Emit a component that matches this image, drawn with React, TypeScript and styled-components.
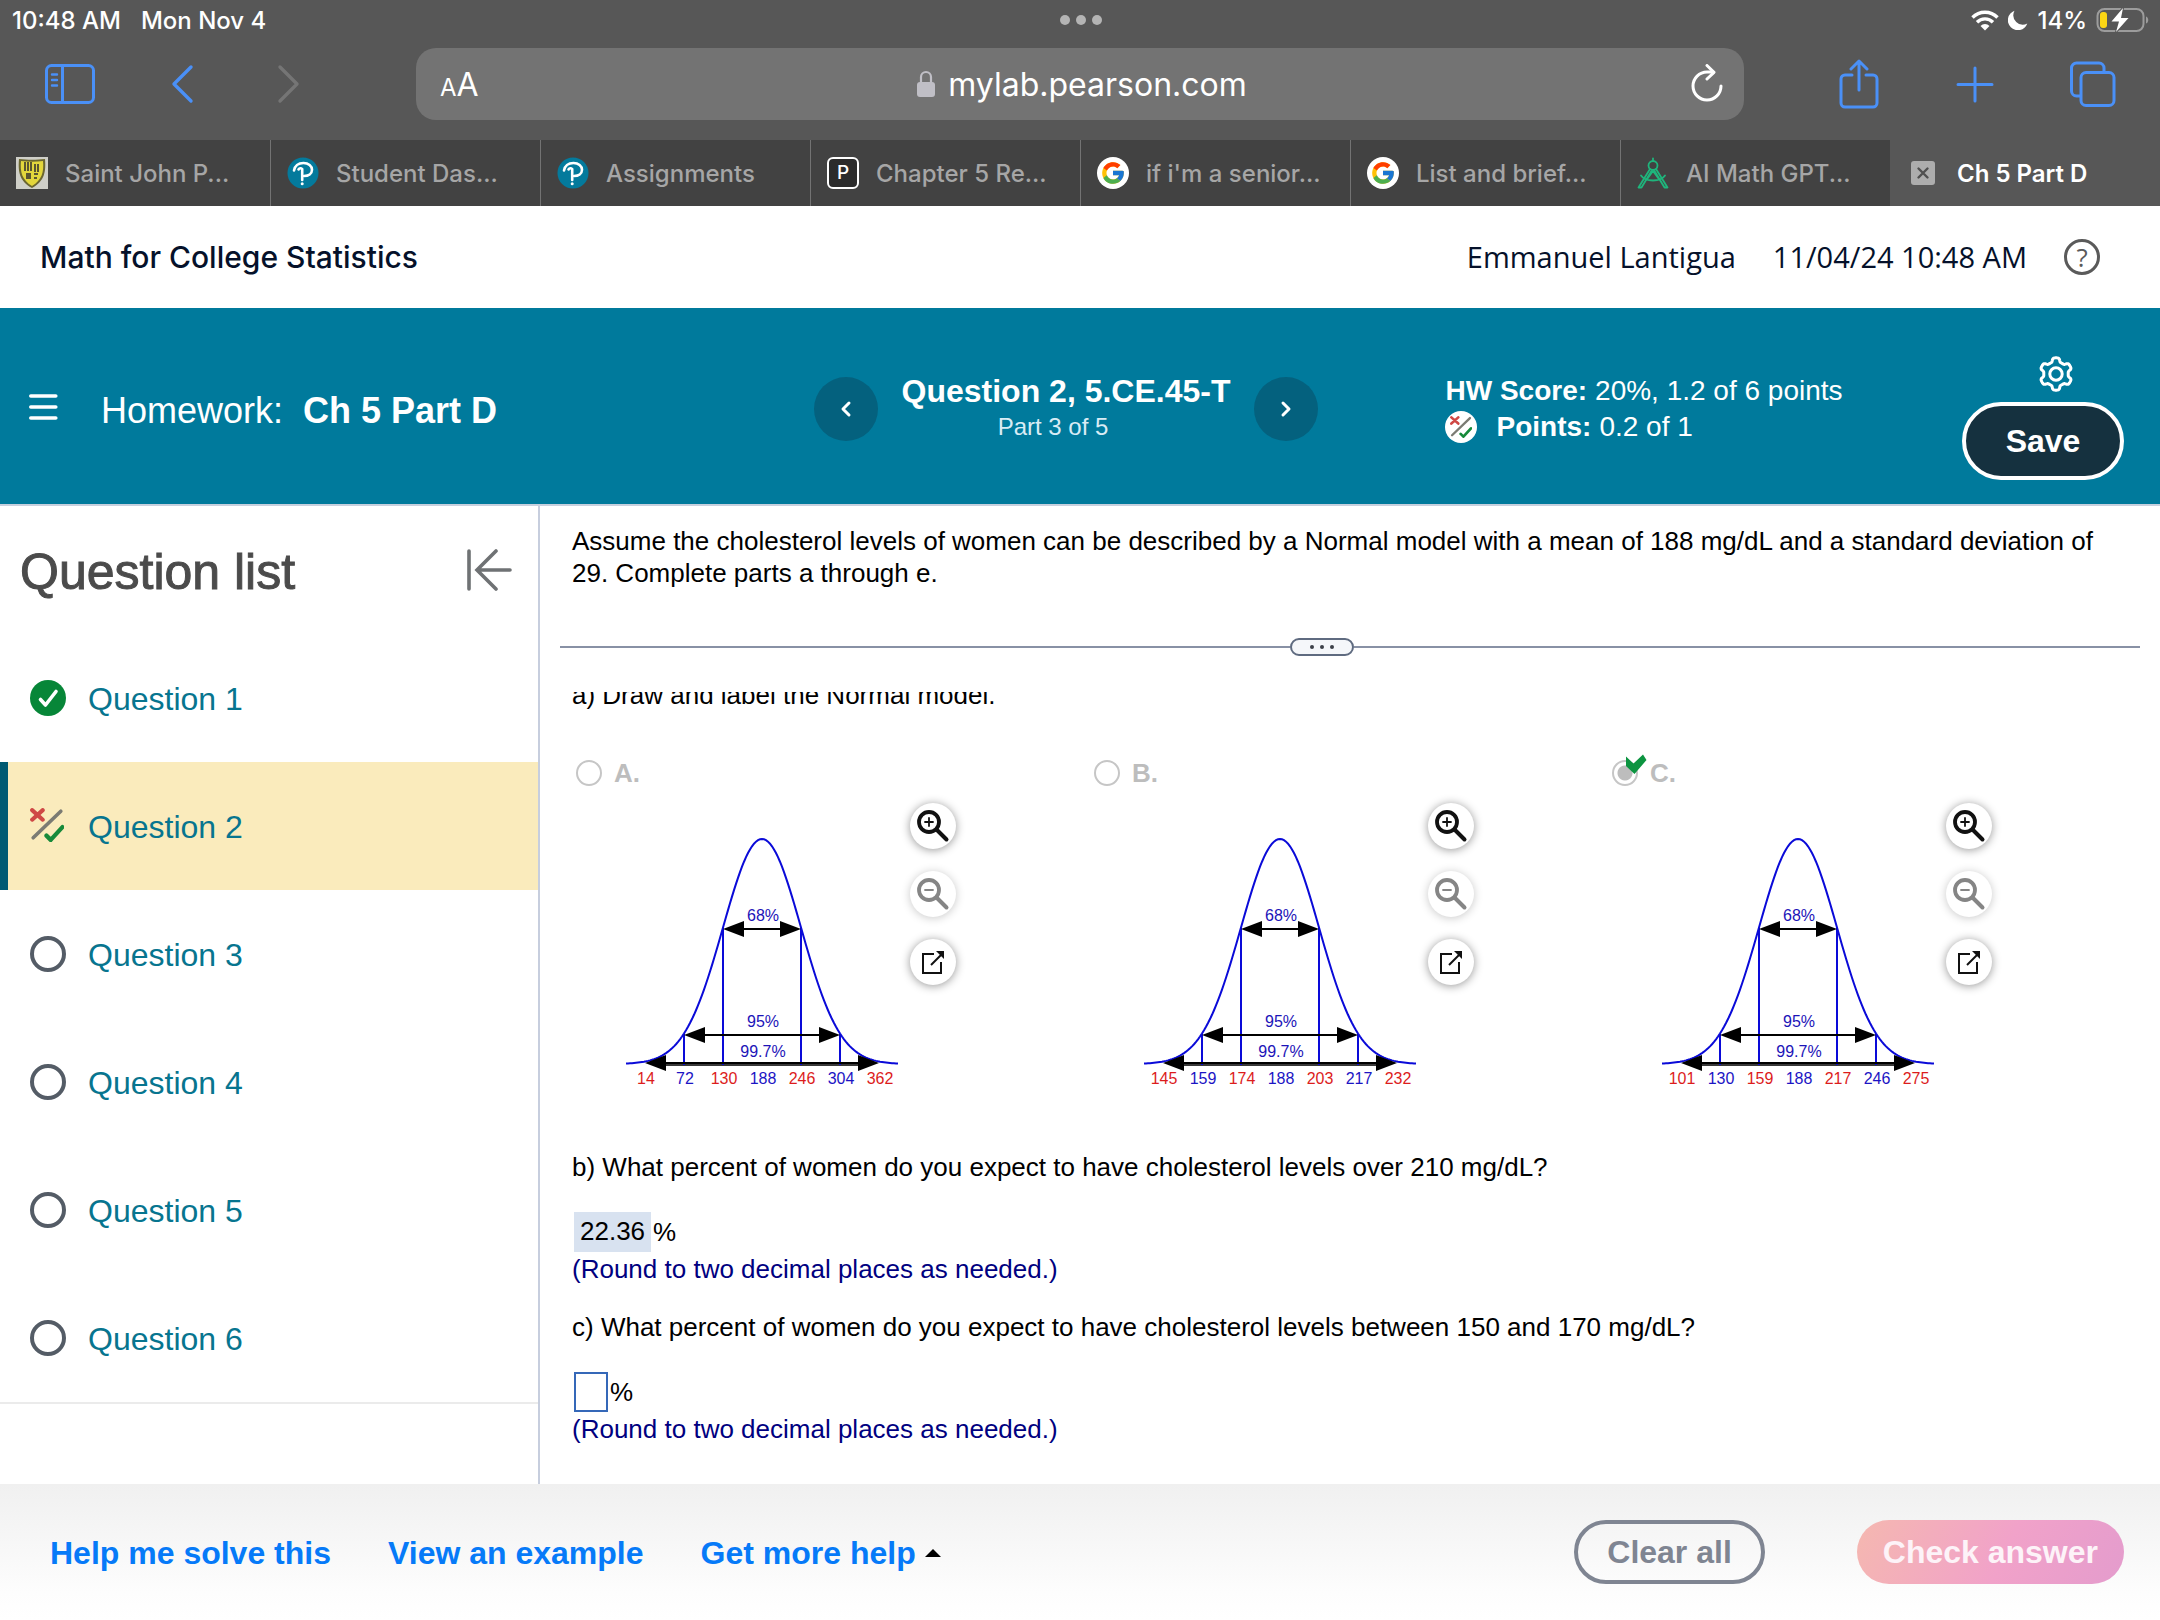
import React from "react";
import styled, { createGlobalStyle } from "styled-components";
import { FcGoogle } from "react-icons/fc";

const ui = `Inter, "Liberation Sans", sans-serif`;
const body = `"Liberation Sans", Arial, sans-serif`;

const GlobalStyle = createGlobalStyle`
  *, *::before, *::after { box-sizing: border-box; }
  body { margin: 0; background: #fff; color: #000; font-family: ${body}; }
  button { font: inherit; color: inherit; background: none; border: 0; padding: 0; margin: 0; cursor: pointer; }
  a { text-decoration: none; color: inherit; }
  h1, h2, p, ul { margin: 0; padding: 0; font-weight: inherit; }
  svg { display: block; flex: none; }
`;

const Page = styled.div`
  min-height: 100vh;
  display: flex;
  flex-direction: column;
`;

/* ---------- browser chrome ---------- */

const Chrome = styled.div`
  background: #575757;
  font-family: ${ui};
`;

const StatusBar = styled.div`
  height: 40px;
  padding: 0 10px 0 12px;
  display: grid;
  grid-template-columns: 1fr auto 1fr;
  align-items: center;
  color: #fff;
  font-size: 24px;
  font-weight: 500;
`;

const StatusGroup = styled.div<{ $end?: boolean }>`
  display: flex;
  align-items: center;
  justify-content: ${(p) => (p.$end ? "flex-end" : "flex-start")};
  gap: ${(p) => (p.$end ? 9 : 20)}px;
`;

const Toolbar = styled.div`
  padding: 8px 42px 20px 45px;
  display: flex;
  align-items: center;
`;

const ToolGroup = styled.div<{ $gap: number }>`
  display: flex;
  align-items: center;
  gap: ${(p) => p.$gap}px;
`;

const ToolButton = styled.button<{ $dim?: boolean }>`
  color: ${(p) => (p.$dim ? "#757575" : "#4a90f7")};
`;

const AddressBar = styled.div`
  flex: 1;
  height: 72px;
  margin: 0 90px 0 111px;
  padding: 0 20px 0 24px;
  border-radius: 20px;
  background: #737373;
  color: #fff;
  display: grid;
  grid-template-columns: 1fr auto 1fr;
  align-items: center;
`;

const TextSize = styled.button`
  justify-self: start;
  display: flex;
  align-items: baseline;
  font-size: 32px;
`;

const SmallA = styled.span`
  font-size: 24px;
`;

const Host = styled.div`
  display: flex;
  align-items: center;
  gap: 13px;
  font-size: 32px;
`;

const Reload = styled.button`
  justify-self: end;
`;

const Tabs = styled.nav`
  display: grid;
  grid-template-columns: repeat(8, minmax(0, 1fr));
  height: 66px;
`;

const Tab = styled.a<{ $active?: boolean; $edge?: boolean }>`
  display: flex;
  align-items: center;
  gap: ${(p) => (p.$active ? 22 : 17)}px;
  padding: 0 8px 0 ${(p) => (p.$active ? 21 : 16)}px;
  background: ${(p) => (p.$active ? "#575757" : "#424242")};
  color: ${(p) => (p.$active ? "#fff" : "#a6a6a6")};
  border-left: ${(p) => (p.$edge ? "1px solid #737373" : "0")};
  font-size: 24px;
  font-weight: ${(p) => (p.$active ? 600 : 500)};
  white-space: nowrap;
`;

const LetterIcon = styled.span`
  width: 32px;
  height: 32px;
  border: 2px solid #fff;
  border-radius: 6px;
  background: #2b2b2b;
  color: #fff;
  font-size: 19px;
  line-height: 28px;
  text-align: center;
`;

const RoundIcon = styled.span`
  width: 32px;
  height: 32px;
  border-radius: 50%;
  background: #fff;
  display: grid;
  place-items: center;
`;

/* ---------- course header ---------- */

const CourseBar = styled.header`
  height: 102px;
  padding: 0 60px 0 40px;
  display: flex;
  align-items: center;
  color: #05112a;
`;

const CourseTitle = styled.h1`
  flex: 1;
  font: 500 30px/40px ${ui};
`;

const UserInfo = styled.div`
  display: flex;
  align-items: center;
  gap: 37px;
  font: 400 29px/40px "Open Sans", "Noto Sans", sans-serif;
`;

const HelpButton = styled.button`
  width: 36px;
  height: 36px;
  border: 3px solid #5a5a5a;
  border-radius: 50%;
  color: #5a5a5a;
  font-size: 26px;
  line-height: 30px;
`;

const AssignmentBar = styled.section`
  min-height: 198px;
  padding: 6px 36px 0 8px;
  border-bottom: 2px solid #c7d0de;
  background: #007a9c;
  color: #fff;
  display: grid;
  grid-template-columns: minmax(0, 1fr) auto minmax(0, 1fr);
  align-items: center;
`;

const HomeworkTitle = styled.div`
  display: flex;
  align-items: center;
  padding: 4px 0 0 21px;
  font-size: 36px;
  line-height: 44px;
`;

const MenuButton = styled.button`
  margin: 0 42px 8px 0;
`;

const HomeworkName = styled.strong`
  margin-left: 20px;
`;

const QuestionNav = styled.div`
  display: flex;
  align-items: center;
  gap: 24px;
`;

const NavButton = styled.button`
  width: 64px;
  height: 64px;
  border-radius: 50%;
  background: #04617e;
  display: grid;
  place-items: center;
`;

const QuestionTitle = styled.div`
  font-size: 32px;
  line-height: 36px;
  font-weight: 700;
`;

const QuestionPart = styled.div`
  padding-right: 26px;
  text-align: center;
  font-size: 24px;
  line-height: 36px;
  color: #d9ecf5;
`;

const ScoreArea = styled.div`
  display: flex;
  justify-content: space-between;
  align-items: center;
  padding-left: 127px;
`;

const ScoreLine = styled.div`
  display: flex;
  align-items: center;
  gap: 8px;
  font-size: 28px;
  line-height: 36px;
`;

const ScoreIcon = styled.span`
  width: 32px;
  height: 32px;
  margin-right: 11px;
  border-radius: 50%;
  background: #fff;
  display: grid;
  place-items: center;
`;

const Actions = styled.div`
  margin-top: 18px;
  display: flex;
  flex-direction: column;
  align-items: flex-end;
  gap: 10px;
`;

const GearButton = styled.button`
  margin-right: 50px;
`;

const SaveButton = styled.button`
  width: 162px;
  height: 78px;
  border: 4px solid #fff;
  border-radius: 39px;
  background: #15313f;
  font-size: 32px;
  font-weight: 700;
`;

/* ---------- question list ---------- */

const Workspace = styled.div`
  flex: 1;
  display: flex;
`;

const Sidebar = styled.aside`
  width: 25%;
  border-right: 2px solid #c7cede;
`;

const SidebarHead = styled.div`
  height: 128px;
  padding: 0 26px 0 20px;
  display: flex;
  align-items: center;
  justify-content: space-between;
  color: #4b4b4b;
`;

const SidebarTitle = styled.h2`
  padding-top: 4px;
  font-size: 50px;
  line-height: 56px;
  -webkit-text-stroke: 1px #4b4b4b;
`;

const QuestionList = styled.ul`
  list-style: none;
  border-bottom: 2px solid #ebebeb;
`;

const QuestionLink = styled.a<{ $current?: boolean }>`
  height: 128px;
  padding-left: 22px;
  border-left: 8px solid ${(p) => (p.$current ? "#005a73" : "transparent")};
  background: ${(p) => (p.$current ? "#faebbc" : "transparent")};
  color: #07758f;
  display: flex;
  align-items: center;
  gap: 22px;
  font-size: 32px;
`;

const QuestionName = styled.span`
  padding-top: 2px;
`;

const StatusSlot = styled.span`
  width: 36px;
  height: 36px;
`;

const OpenCircle = styled.span`
  display: block;
  width: 36px;
  height: 36px;
  border: 4px solid #545c66;
  border-radius: 50%;
`;

/* ---------- exercise ---------- */

const Exercise = styled.main`
  flex: 1;
  min-width: 0;
  font-size: 26px;
  line-height: 32px;
`;

const Prompt = styled.p`
  padding: 19px 34px 0 32px;
`;

const Divider = styled.div`
  margin: 49px 20px 36px;
  display: flex;
  align-items: center;

  &::before,
  &::after {
    content: "";
    flex: 13;
    height: 2px;
    background: #8891a5;
  }

  &::after {
    flex: 14;
  }
`;

const DividerHandle = styled.button`
  width: 64px;
  height: 18px;
  border: 2px solid #5f6b80;
  border-radius: 9px;
  background: #f5f7fa;
  display: flex;
  align-items: center;
  justify-content: center;
  gap: 6px;
`;

const Dot = styled.span<{ $size: number; $color: string }>`
  width: ${(p) => p.$size}px;
  height: ${(p) => p.$size}px;
  border-radius: 50%;
  background: ${(p) => p.$color};
`;

const DotRow = styled.div`
  display: flex;
  gap: 6px;
`;

const Scroller = styled.div`
  overflow: hidden;
  padding: 0 34px 37px 32px;
`;

/* The pane is scrolled a little, so its first line is cut at the top edge. */
const ScrolledLine = styled.p`
  margin-top: -13px;
`;

const Options = styled.div`
  margin-top: 46px;
  display: grid;
  grid-template-columns: repeat(3, minmax(0, 1fr));
`;

const OptionLabel = styled.label`
  display: flex;
  align-items: center;
  padding-left: 4px;
  gap: 12px;
  color: #bdbdbd;
  font-weight: 700;
`;

const RadioWrap = styled.span`
  position: relative;
  display: flex;
`;

const Radio = styled.input`
  appearance: none;
  width: 26px;
  height: 26px;
  margin: 0;
  border: 2px solid #c6c6c6;
  border-radius: 50%;
  background: #fff;

  &:checked {
    background: radial-gradient(circle, #bdbdbd 0 7px, #fff 8px);
  }
`;

const CorrectMark = styled.svg`
  position: absolute;
  left: 13px;
  top: -6px;
`;

const GraphRow = styled.div`
  margin-top: 11px;
  display: flex;
  gap: 12px;
`;

const GraphTools = styled.div`
  display: flex;
  flex-direction: column;
  gap: 22px;
  padding-top: 3px;
`;

const GraphButton = styled.button`
  width: 46px;
  height: 46px;
  border-radius: 50%;
  background: #fff;
  box-shadow: 0 1px 10px rgba(0, 0, 0, 0.42);
  display: grid;
  place-items: center;
  color: #111;

  &:disabled {
    color: #858585;
    box-shadow: 0 1px 10px rgba(0, 0, 0, 0.22);
  }
`;

const PartText = styled.p<{ $first?: boolean }>`
  margin-top: ${(p) => (p.$first ? 51 : 26)}px;
`;

const AnswerRow = styled.div`
  margin-top: 29px;
  margin-bottom: 1px;
  padding-left: 2px;
  display: flex;
  align-items: center;
  gap: 2px;
`;

const GivenAnswer = styled.output`
  height: 40px;
  padding: 0 6px;
  background: #d8e2f0;
  line-height: 39px;
`;

const AnswerInput = styled.input`
  width: 34px;
  height: 40px;
  padding: 0 4px;
  border: 2px solid #3568b8;
  background: #fff;
  font: inherit;
`;

const Hint = styled.p`
  color: #000080;
`;

/* ---------- footer ---------- */

const Footer = styled.footer`
  height: 136px;
  padding: 0 36px 0 50px;
  background: linear-gradient(#f0f0f0, #fdfdfd 80%, #fff);
  display: flex;
  align-items: center;
  font-size: 32px;
  font-weight: 700;
`;

const HelpLinks = styled.div`
  flex: 1;
  display: flex;
  align-items: center;
  gap: 57px;
`;

const HelpLink = styled.button`
  display: flex;
  align-items: center;
  gap: 9px;
  padding-top: 2px;
  color: #067af8;
  line-height: 40px;
`;

const FooterButtons = styled.div`
  display: flex;
  gap: 92px;
`;

const PillButton = styled.button<{ $primary?: boolean }>`
  height: 64px;
  padding: 0 ${(p) => (p.$primary ? 26 : 29)}px;
  border: ${(p) => (p.$primary ? "0" : "4px solid #7f8592")};
  border-radius: 32px;
  color: ${(p) => (p.$primary ? "#fdf3f8" : "#7f8592")};
  background: ${(p) =>
    p.$primary ? "linear-gradient(115deg, #f5b8b0, #f1a2c9 55%, #e49ccd)" : "transparent"};
`;

/* ---------- drawings ---------- */

const stroke = (width: number) => ({
  fill: "none",
  stroke: "currentColor",
  strokeWidth: width,
  strokeLinecap: "round" as const,
  strokeLinejoin: "round" as const,
});

const PearsonIcon = () => (
  <svg width="32" height="32" viewBox="0 0 32 32">
    <circle cx="16" cy="16" r="15.5" fill="#047a9c" />
    <path d="M7 13.500C8 8.500 12 6 16.500 6c5 0 8.500 3 8.500 6.800 0 4-3.500 6.200-8 6.200" fill="none" stroke="#fff" strokeWidth="2.600" strokeLinecap="round" />
    <path d="M11.500 12.500c1-1.700 2.500-1.700 3.700-.3V23" fill="none" stroke="#fff" strokeWidth="2.600" strokeLinecap="round" />
    <circle cx="15.200" cy="26.800" r="1.500" fill="#fff" />
  </svg>
);

const ShieldIcon = () => (
  <svg width="32" height="32" viewBox="0 0 32 32">
    <rect width="32" height="32" fill="#cfcfc8" />
    <path d="M3 2c8 1 18 1 26 0 1 12 0 22-13 29C3 24 2 14 3 2z" fill="#6b6630" />
    <path d="M5 4c7 1 15 1 22 0 1 11-1 19-11 25C6 23 4 15 5 4z" fill="#e3d63c" />
    <path d="M8 5h2v9H8zM11 5h2v9h-2zM14 5h2v9h-2zM18 7h2v8h-2zM21 7h2v8h-2zM10 16h5v6h-5zM18 16h4v2h-4zM18 20h3v2h-3z" fill="#5b5531" />
  </svg>
);

const CompassIcon = () => (
  <svg width="32" height="32" viewBox="0 0 32 32" fill="none" stroke="#1fb57c" strokeWidth="1.800" strokeLinejoin="round" strokeLinecap="round">
    <path d="M16 1.500V4" />
    <circle cx="16" cy="8.500" r="4.500" />
    <path d="M13 12 1.500 30.500h3L14.500 14M19 12l11.500 18.500h-3L17.500 14" />
    <path d="M4 18.500c2 3 6 5 12 5s10-2 12-5M10.500 21.500 16 14l5.500 7.500" />
  </svg>
);

const GradedIcon = ({ size }: { size: number }) => (
  <svg width={size} height={size} viewBox="0 0 32 32" fill="none" strokeLinecap="round">
    <path d="M2 2l10 9M12 2 2 11" stroke="#cf4845" strokeWidth="3.800" />
    <path d="M29 3 3 28" stroke="#7b7b73" strokeWidth="3.400" />
    <path d="M15.500 26l4 4L30.500 18" stroke="#178a3a" strokeWidth="4" strokeLinejoin="round" />
  </svg>
);

const CheckedIcon = () => (
  <svg width="36" height="36" viewBox="0 0 36 36">
    <circle cx="18" cy="18" r="18" fill="#078638" />
    <path d="M10.500 19.500l5 5.500L26 11.500" fill="none" stroke="#fff" strokeWidth="3.600" strokeLinecap="round" strokeLinejoin="round" />
  </svg>
);

/* Outline of a six-toothed gear with soft edges. */
const gearOutline = Array.from({ length: 180 }, (_, i) => {
  const angle = (i / 180) * Math.PI * 2;
  const radius = 14.2 + 2 * Math.tanh(2.4 * Math.cos(6 * angle));
  const x = 18 + radius * Math.sin(angle);
  const y = 18 - radius * Math.cos(angle);
  return `${x.toFixed(2)},${y.toFixed(2)}`;
}).join(" ");

const GearIcon = () => (
  <svg width="36" height="36" viewBox="0 0 36 36" {...stroke(3)}>
    <polygon points={gearOutline} />
    <circle cx="18" cy="18" r="6.200" />
  </svg>
);

const Magnifier = ({ plus }: { plus?: boolean }) => (
  <svg width="34" height="34" viewBox="0 0 34 34" {...stroke(3.8)}>
    <circle cx="13" cy="13" r="10" />
    <path d="M21 21l9.500 9.500" strokeWidth="4" />
    <path d={plus ? "M9 13h8M13 9v8" : "M9 13h8"} strokeWidth="1.800" />
  </svg>
);

const PopOutIcon = () => (
  <svg width="26" height="26" viewBox="0 0 26 26" fill="none" stroke="currentColor" strokeWidth="2">
    <path d="M14 5H3v19h18V13" />
    <path d="M11 16 21 6" />
    <path d="M16 2h8v8z" fill="currentColor" stroke="none" />
  </svg>
);

/* ---------- normal curve ---------- */

const SIGMA = 39;
const CENTER = 190;
const BASE = 264;
const PEAK = 225;

const curve = Array.from({ length: 137 }, (_, i) => {
  const x = -136 + i * 2;
  const y = BASE - PEAK * Math.exp(-(x * x) / (2 * SIGMA * SIGMA));
  return `${CENTER + x},${y.toFixed(2)}`;
}).join(" ");

const bands = [
  { text: "68%", y: 129, half: SIGMA, label: 121 },
  { text: "95%", y: 235, half: SIGMA * 2, label: 227 },
  { text: "99.7%", y: 263, half: SIGMA * 3, label: 257 },
];

const NormalCurve = ({ ticks }: { ticks: number[] }) => (
  <svg width="326" height="300" viewBox="0 0 326 300" fontFamily={body} fontSize="16" textAnchor="middle">
    <polyline points={curve} fill="none" stroke="#0a0ad8" strokeWidth="2" />
    <path d={`M${CENTER - 104} 264h208`} stroke="#383838" strokeWidth="4" />
    <path d="M112 234v31M151 128v137M229 128v137M268 234v31" stroke="#0a0ad8" strokeWidth="2" />
    {bands.map((b) => (
      <g key={b.text}>
        <path d={`M${CENTER - b.half + 4} ${b.y}h${b.half * 2 - 8}`} stroke="#000" strokeWidth="2" />
        <path
          d={`M${CENTER - b.half} ${b.y}l21-8v16zM${CENTER + b.half} ${b.y}l-21-8v16z`}
          fill="#000"
        />
        <text x={CENTER + 1} y={b.label} fill="#1c14b8">{b.text}</text>
      </g>
    ))}
    {ticks.map((t, i) => (
      <text key={t} x={CENTER + 1 + (i - 3) * SIGMA} y="284" fill={i % 2 ? "#1c14c4" : "#dc1c1c"}>
        {t}
      </text>
    ))}
  </svg>
);

/* ---------- data ---------- */

const tabs = [
  { title: "Saint John P...", icon: <ShieldIcon /> },
  { title: "Student Das...", icon: <PearsonIcon /> },
  { title: "Assignments", icon: <PearsonIcon /> },
  { title: "Chapter 5 Re...", icon: <LetterIcon>P</LetterIcon> },
  { title: "if i'm a senior...", icon: <RoundIcon><FcGoogle size={26} /></RoundIcon> },
  { title: "List and brief...", icon: <RoundIcon><FcGoogle size={26} /></RoundIcon> },
  { title: "AI Math GPT...", icon: <CompassIcon /> },
];

const options = [
  { letter: "A", ticks: [14, 72, 130, 188, 246, 304, 362] },
  { letter: "B", ticks: [145, 159, 174, 188, 203, 217, 232] },
  { letter: "C", ticks: [101, 130, 159, 188, 217, 246, 275], correct: true },
];

const questionStatus = (n: number) =>
  n === 1 ? <CheckedIcon /> : n === 2 ? <GradedIcon size={34} /> : <OpenCircle />;

export default function App() {
  return (
    <Page>
      <GlobalStyle />
      <Chrome>
        <StatusBar>
          <StatusGroup>
            <span>10:48 AM</span>
            <span>Mon Nov 4</span>
          </StatusGroup>
          <DotRow>
            {[0, 1, 2].map((i) => <Dot key={i} $size={10} $color="#b4b4b4" />)}
          </DotRow>
          <StatusGroup $end>
            <svg width="28" height="22" viewBox="0 0 28 22" fill="none" stroke="#fff" strokeWidth="3.400">
              <path d="M1.500 8.500a17.500 17.500 0 0 1 25 0" />
              <path d="M6 13.200a11.300 11.300 0 0 1 16 0" />
              <path d="M14 21.500l-4.500-4.600a6.400 6.400 0 0 1 9 0z" fill="#fff" stroke="none" />
            </svg>
            <svg width="20" height="20" viewBox="0 0 20 20">
              <path d="M6.500 .8A10 10 0 1 0 19.300 13.600 9.500 9.500 0 0 1 6.500 .8z" fill="#fff" />
            </svg>
            <span>14%</span>
            <svg width="54" height="26" viewBox="0 0 54 26">
              <rect x="1.500" y="2" width="46" height="22" rx="7" fill="none" stroke="#9c9c9c" strokeWidth="2" />
              <path d="M50 9.500c3 1 3 6 0 7z" fill="#9c9c9c" />
              <rect x="4" y="5" width="7" height="16" rx="3" fill="#fbd614" />
              <path d="M27 1 15.500 14.500h7.500L20 25 32.500 11H25z" fill="#fff" stroke="#575757" strokeWidth="2" paintOrder="stroke" />
            </svg>
          </StatusGroup>
        </StatusBar>
        <Toolbar>
          <ToolGroup $gap={71}>
            <ToolButton aria-label="Sidebar">
              <svg width="50" height="40" viewBox="0 0 50 40" {...stroke(3)}>
                <rect x="1.500" y="1.500" width="47" height="37" rx="5" />
                <path d="M17.500 2v36" />
                <path d="M7 10.500h5M7 16h5M7 21.500h5" strokeWidth="2.400" />
              </svg>
            </ToolButton>
            <ToolButton aria-label="Back">
              <svg width="34" height="40" viewBox="0 0 34 40" {...stroke(3.4)}><path d="M25 3 8 20l17 17" /></svg>
            </ToolButton>
            <ToolButton $dim aria-label="Forward">
              <svg width="34" height="40" viewBox="0 0 34 40" {...stroke(3.4)}><path d="M9 3l17 17L9 37" /></svg>
            </ToolButton>
          </ToolGroup>
          <AddressBar>
            <TextSize aria-label="Text size"><SmallA>A</SmallA>A</TextSize>
            <Host>
              <svg width="18" height="28" viewBox="0 0 18 28">
                <path d="M4 13V7a5 5 0 0 1 10 0v6" fill="none" stroke="#c0bfc6" strokeWidth="2.200" />
                <rect y="12" width="18" height="15" rx="3" fill="#c0bfc6" />
              </svg>
              <span>mylab.pearson.com</span>
            </Host>
            <Reload aria-label="Reload">
              <svg width="34" height="40" viewBox="0 0 34 40" stroke="#fff" {...stroke(3)}>
                <path d="M31 22a14 14 0 1 1-14-14h6" />
                <path d="M17 1.500 24 8.300 17 15" />
              </svg>
            </Reload>
          </AddressBar>
          <ToolGroup $gap={67}>
            <ToolButton aria-label="Share">
              <svg width="50" height="50" viewBox="0 0 50 50" {...stroke(3)}>
                <path d="M18 16h-7a4 4 0 0 0-4 4v24a4 4 0 0 0 4 4h28a4 4 0 0 0 4-4V20a4 4 0 0 0-4-4h-7M25 31V2M17 10l8-8 8 8" />
              </svg>
            </ToolButton>
            <ToolButton aria-label="New tab">
              <svg width="50" height="50" viewBox="0 0 50 50" {...stroke(3)}><path d="M24 9v33M7 25.500h34" /></svg>
            </ToolButton>
            <ToolButton aria-label="All tabs">
              <svg width="50" height="50" viewBox="0 0 50 50" {...stroke(3)}>
                <rect x="13" y="13.500" width="33" height="33" rx="5" />
                <path d="M12 37H8.500A5 5 0 0 1 3.500 32V9A5 5 0 0 1 8.500 4h22.500a5 5 0 0 1 5 5v3.500" />
              </svg>
            </ToolButton>
          </ToolGroup>
        </Toolbar>
        <Tabs>
          {tabs.map((t, i) => (
            <Tab key={t.title} href="#" $edge={i > 0}>
              {t.icon}
              <span>{t.title}</span>
            </Tab>
          ))}
          <Tab href="#" $active>
            <svg width="24" height="24" viewBox="0 0 24 24">
              <rect width="24" height="24" rx="3" fill="#adadad" />
              <path d="M7.500 7.500l9 9M16.500 7.500l-9 9" stroke="#505050" strokeWidth="2.400" strokeLinecap="round" />
            </svg>
            <span>Ch 5 Part D</span>
          </Tab>
        </Tabs>
      </Chrome>

      <CourseBar>
        <CourseTitle>Math for College Statistics</CourseTitle>
        <UserInfo>
          <span>Emmanuel Lantigua</span>
          <span>11/04/24 10:48 AM</span>
          <HelpButton>?</HelpButton>
        </UserInfo>
      </CourseBar>

      <AssignmentBar>
        <HomeworkTitle>
          <MenuButton aria-label="Menu">
            <svg width="30" height="28" viewBox="0 0 30 28" {...stroke(3.6)}><path d="M1.800 3h25M1.800 14h25M1.800 25h25" /></svg>
          </MenuButton>
          <span>Homework:</span>
          <HomeworkName>Ch 5 Part D</HomeworkName>
        </HomeworkTitle>
        <QuestionNav>
          <NavButton aria-label="Previous question">
            <svg width="12" height="18" viewBox="0 0 12 18" {...stroke(3)}><path d="M9 3 3 9l6 6" /></svg>
          </NavButton>
          <div>
            <QuestionTitle>Question 2, 5.CE.45-T</QuestionTitle>
            <QuestionPart>Part 3 of 5</QuestionPart>
          </div>
          <NavButton aria-label="Next question">
            <svg width="12" height="18" viewBox="0 0 12 18" {...stroke(3)}><path d="M3 3l6 6-6 6" /></svg>
          </NavButton>
        </QuestionNav>
        <ScoreArea>
          <div>
            <ScoreLine><strong>HW Score:</strong><span>20%, 1.2 of 6 points</span></ScoreLine>
            <ScoreLine>
              <ScoreIcon><GradedIcon size={22} /></ScoreIcon>
              <strong>Points:</strong><span>0.2 of 1</span>
            </ScoreLine>
          </div>
          <Actions>
            <GearButton aria-label="Settings"><GearIcon /></GearButton>
            <SaveButton>Save</SaveButton>
          </Actions>
        </ScoreArea>
      </AssignmentBar>

      <Workspace>
        <Sidebar>
          <SidebarHead>
            <SidebarTitle>Question list</SidebarTitle>
            <button aria-label="Collapse question list">
              <svg width="46" height="42" viewBox="0 0 46 42" fill="none" stroke="#6f7274" strokeWidth="3.600" strokeLinecap="round">
                <path d="M3 2v38M44 21H12M30 2 11 21l19 19" />
              </svg>
            </button>
          </SidebarHead>
          <QuestionList>
            {[1, 2, 3, 4, 5, 6].map((n) => (
              <li key={n}>
                <QuestionLink href="#" $current={n === 2}>
                  <StatusSlot>{questionStatus(n)}</StatusSlot>
                  <QuestionName>Question {n}</QuestionName>
                </QuestionLink>
              </li>
            ))}
          </QuestionList>
        </Sidebar>

        <Exercise>
          <Prompt>
            Assume the cholesterol levels of women can be described by a Normal model with a mean of 188 mg/dL and a
            standard deviation of 29. Complete parts a through e.
          </Prompt>
          <Divider>
            <DividerHandle aria-label="Resize">
              {[0, 1, 2].map((i) => <Dot key={i} $size={4} $color="#3c4048" />)}
            </DividerHandle>
          </Divider>
          <Scroller>
            <ScrolledLine>a) Draw and label the Normal model.</ScrolledLine>
            <Options>
              {options.map((o) => (
                <div key={o.letter}>
                  <OptionLabel>
                    <RadioWrap>
                      <Radio type="radio" name="model" disabled defaultChecked={o.correct} />
                      {o.correct && (
                        <CorrectMark width="22" height="22" viewBox="0 0 22 22">
                          <path d="M1 2.500 8.500 9.500 18 .500 21.500 6 9.500 20 1 12z" fill="#0c9440" />
                        </CorrectMark>
                      )}
                    </RadioWrap>
                    {o.letter}.
                  </OptionLabel>
                  <GraphRow>
                    <NormalCurve ticks={o.ticks} />
                    <GraphTools>
                      <GraphButton aria-label="Zoom in"><Magnifier plus /></GraphButton>
                      <GraphButton aria-label="Zoom out" disabled><Magnifier /></GraphButton>
                      <GraphButton aria-label="Open in new window"><PopOutIcon /></GraphButton>
                    </GraphTools>
                  </GraphRow>
                </div>
              ))}
            </Options>
            <PartText $first>b) What percent of women do you expect to have cholesterol levels over 210 mg/dL?</PartText>
            <AnswerRow><GivenAnswer>22.36</GivenAnswer><span>%</span></AnswerRow>
            <Hint>(Round to two decimal places as needed.)</Hint>
            <PartText>
              <label htmlFor="answer-c">
                c) What percent of women do you expect to have cholesterol levels between 150 and 170 mg/dL?
              </label>
            </PartText>
            <AnswerRow><AnswerInput id="answer-c" type="text" /><span>%</span></AnswerRow>
            <Hint>(Round to two decimal places as needed.)</Hint>
          </Scroller>
        </Exercise>
      </Workspace>

      <Footer>
        <HelpLinks>
          <HelpLink>Help me solve this</HelpLink>
          <HelpLink>View an example</HelpLink>
          <HelpLink>
            Get more help
            <svg width="16" height="8" viewBox="0 0 16 8"><path d="M8 0l8 8H0z" fill="#000" /></svg>
          </HelpLink>
        </HelpLinks>
        <FooterButtons>
          <PillButton>Clear all</PillButton>
          <PillButton $primary>Check answer</PillButton>
        </FooterButtons>
      </Footer>
    </Page>
  );
}
